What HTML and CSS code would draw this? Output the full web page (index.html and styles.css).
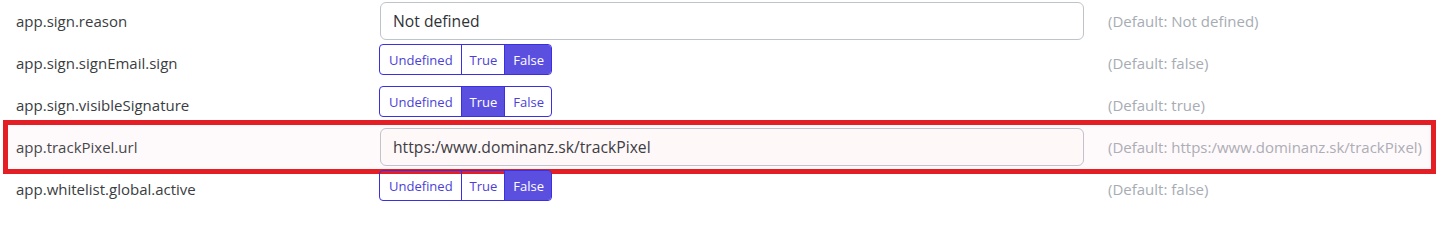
FILE: index.html
```html
<!DOCTYPE html>
<html lang="en">
<head>
<meta charset="utf-8">
<title>Settings</title>
<link rel="stylesheet" href="styles.css">
</head>
<body>
<div class="table">
  <div class="row">
    <div class="label">app.sign.reason</div>
    <div class="control"><div class="input">Not defined</div></div>
    <div class="default">(Default: Not defined)</div>
  </div>
  <div class="row">
    <div class="label">app.sign.signEmail.sign</div>
    <div class="control">
      <div class="btn-group">
        <span class="btn">Undefined</span><span class="btn">True</span><span class="btn active">False</span>
      </div>
    </div>
    <div class="default">(Default: false)</div>
  </div>
  <div class="row">
    <div class="label">app.sign.visibleSignature</div>
    <div class="control">
      <div class="btn-group">
        <span class="btn">Undefined</span><span class="btn active">True</span><span class="btn">False</span>
      </div>
    </div>
    <div class="default">(Default: true)</div>
  </div>
  <div class="row highlighted">
    <div class="label">app.trackPixel.url</div>
    <div class="control"><div class="input">https:/www.dominanz.sk/trackPixel</div></div>
    <div class="default">(Default: https:/www.dominanz.sk/trackPixel)</div>
    <div class="marker"></div>
  </div>
  <div class="row">
    <div class="label">app.whitelist.global.active</div>
    <div class="control">
      <div class="btn-group">
        <span class="btn">Undefined</span><span class="btn">True</span><span class="btn active">False</span>
      </div>
    </div>
    <div class="default">(Default: false)</div>
  </div>
</div>
</body>
</html>
```
FILE: styles.css
```css
html, body {
  margin: 0;
  padding: 0;
  background: #ffffff;
}
body {
  font-family: "Open Sans", "Noto Sans", sans-serif;
  color: #3a3d42;
  overflow: hidden;
}
.table {
  display: flex;
  flex-direction: column;
}
.row {
  display: grid;
  grid-template-columns: 340px 704px 1fr;
  column-gap: 24px;
  height: 42px;
  padding-left: 16px;
  box-sizing: border-box;
  position: relative;
}
.label {
  font-size: 15px;
  align-self: center;
  white-space: nowrap;
}
.control {
  padding-top: 2px;
}
.input {
  height: 38px;
  box-sizing: border-box;
  border: 1px solid #bfc3ca;
  border-radius: 6px;
  padding: 0 12px;
  display: flex;
  align-items: center;
  font-size: 15.7px;
  color: #2f3236;
  background: #fff;
}
.default {
  font-size: 15px;
  color: #a7acb4;
  align-self: center;
  white-space: nowrap;
}
.btn-group {
  display: inline-flex;
  height: 31px;
  box-sizing: border-box;
  border: 1px solid #3b2fe2;
  border-radius: 4px;
  overflow: hidden;
  margin-left: -1px;
}
.btn {
  display: flex;
  align-items: center;
  padding: 0 7px 0 8px;
  font-size: 13px;
  color: #4b3fd8;
  border-left: 1px solid #3b2fe2;
}
.btn:first-child {
  border-left: none;
  padding: 0 8px 0 9px;
}
.btn.active {
  background: #5b4fe0;
  color: #ffffff;
}
.highlighted .input {
  background: #fffdfd;
}
.marker {
  position: absolute;
  left: 3px;
  right: 2px;
  top: -6px;
  bottom: -6px;
  border: 5px solid #e31e24;
  background: rgba(240, 190, 205, 0.08);
  pointer-events: none;
}
```
